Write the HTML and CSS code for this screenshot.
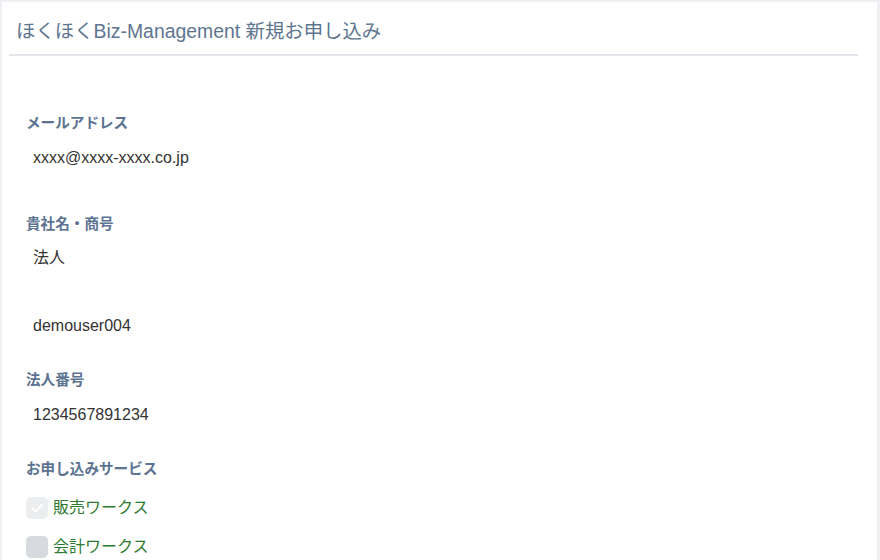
FILE: index.html
```html
<!DOCTYPE html>
<html lang="ja">
<head>
<meta charset="utf-8">
<title>新規お申し込み</title>
<link rel="stylesheet" href="styles.css">
</head>
<body>
<div class="card">
  <div class="header">
    <h1 class="title">ほくほくBiz-Management 新規お申し込み</h1>
  </div>
  <div class="form">
    <div class="field first">
      <div class="label">メールアドレス</div>
      <div class="value">xxxx@xxxx-xxxx.co.jp</div>
    </div>
    <div class="field">
      <div class="label">貴社名・商号</div>
      <div class="value">法人</div>
    </div>
    <div class="field nolabel">
      <div class="label empty"></div>
      <div class="value">demouser004</div>
    </div>
    <div class="field tight">
      <div class="label">法人番号</div>
      <div class="value">1234567891234</div>
    </div>
    <div class="field tight">
      <div class="label">お申し込みサービス</div>
      <div class="checks">
        <label class="check">
          <span class="box checked">
            <svg viewBox="0 0 22 22" width="22" height="22"><path d="M6.5 11.5 L9.7 14.6 L15.8 7.8" fill="none" stroke="#ffffff" stroke-width="2" stroke-linecap="round" stroke-linejoin="round"/></svg>
          </span>
          <span class="check-text">販売ワークス</span>
        </label>
        <label class="check">
          <span class="box"></span>
          <span class="check-text">会計ワークス</span>
        </label>
      </div>
    </div>
  </div>
</div>
</body>
</html>
```

FILE: styles.css
```css
html, body {
  margin: 0;
  padding: 0;
  height: 100%;
}
body {
  background: #eef0f3;
  font-family: "Liberation Sans", "Noto Sans CJK JP", sans-serif;
  color: #333333;
  padding: 2px 3px 0 2px;
  box-sizing: border-box;
  overflow: hidden;
}
.card {
  background: #ffffff;
  min-height: 100%;
  padding: 0 19px 0 7px;
}
.header {
  border-bottom: 2px solid #e2e6ea;
  height: 54px;
  box-sizing: border-box;
  padding-top: 19px;
}
.title {
  margin: 0;
  padding-left: 7px;
  font-size: 19.4px;
  font-weight: normal;
  color: #5e7590;
  line-height: 20px;
}
.form {
  padding: 57px 0 0 17px;
}
.field {
  margin-top: 45px;
}
.field.first {
  margin-top: 0;
}
.field.nolabel {
  margin-top: 19px;
}
.field.tight {
  margin-top: 33px;
}
.label {
  font-size: 14.6px;
  font-weight: bold;
  color: #5b7290;
  line-height: 20px;
  height: 20px;
}
.label.empty {
  height: 13.5px;
}
.value {
  font-size: 16px;
  color: #333333;
  line-height: 22px;
  margin-top: 13.5px;
  padding-left: 7px;
}
.checks {
  margin-top: 18px;
  display: flex;
  flex-direction: column;
  gap: 17px;
}
.check {
  display: flex;
  align-items: center;
  gap: 5px;
}
.box {
  width: 22px;
  height: 22px;
  border-radius: 5px;
  background: #d7dbe0;
  display: block;
}
.box.checked {
  background: #ebedef;
}
.box svg {
  display: block;
}
.check-text {
  font-size: 16px;
  color: #2f7a32;
  line-height: 20px;
}
```
